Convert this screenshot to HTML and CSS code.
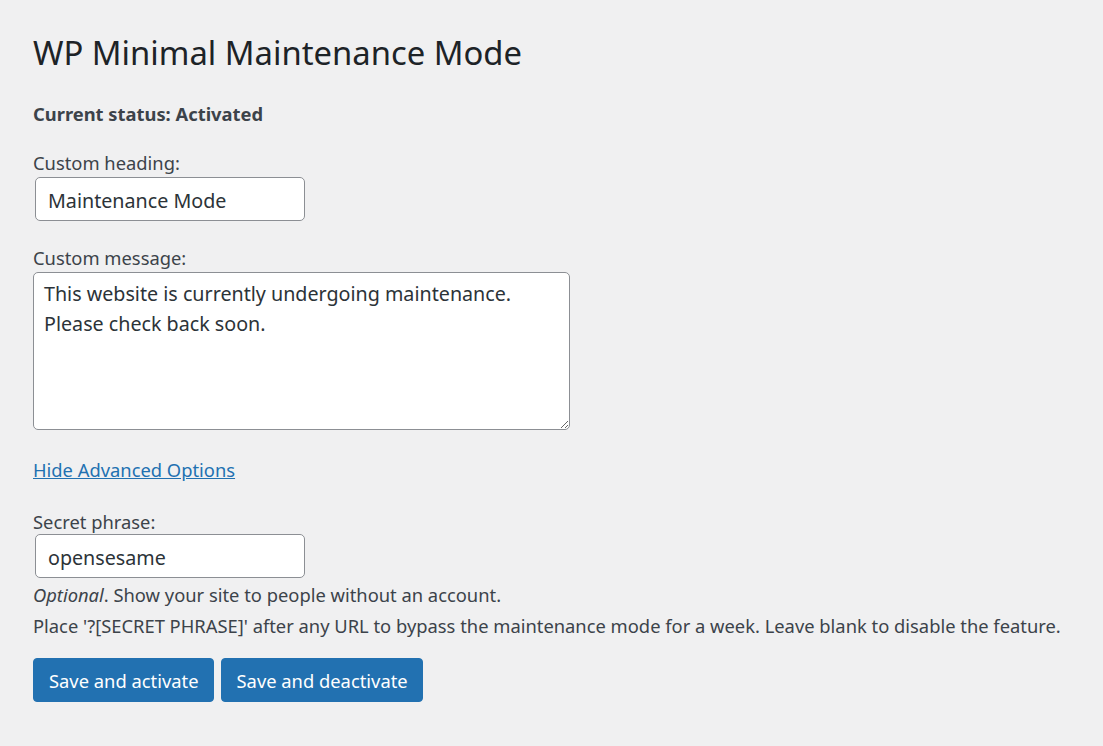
FILE: index.html
```html
<!DOCTYPE html>
<html>
<head>
<meta charset="utf-8">
<link rel="stylesheet" href="styles.css">
</head>
<body>
<div class="wrap">
  <h1 class="title">WP Minimal Maintenance Mode</h1>
  <p class="status">Current status: Activated</p>
  <form class="form">
    <div class="field field-heading">
      <label class="label" for="heading">Custom heading:</label>
      <input class="input" id="heading" type="text" value="Maintenance Mode">
    </div>
    <div class="field field-message">
      <label class="label" for="message">Custom message:</label>
      <textarea class="textarea" id="message">This website is currently undergoing maintenance.
Please check back soon.</textarea>
    </div>
    <a class="toggle" href="#">Hide Advanced Options</a>
    <div class="field field-secret">
      <label class="label" for="secret">Secret phrase:</label>
      <input class="input" id="secret" type="text" value="opensesame">
      <p class="desc"><em>Optional</em>. Show your site to people without an account.<br>Place '?[SECRET PHRASE]' after any URL to bypass the maintenance mode for a week. Leave blank to disable the feature.</p>
    </div>
    <div class="actions">
      <button class="button" type="button">Save and activate</button>
      <button class="button" type="button">Save and deactivate</button>
    </div>
  </form>
</div>
</body>
</html>
```
FILE: styles.css
```css
html, body {
  margin: 0;
  padding: 0;
  background: #f0f0f1;
}
body {
  font-family: "Noto Sans", "Open Sans", sans-serif;
  font-size: 18.35px;
  color: #3c434a;
}
.wrap {
  padding: 30px 33px;
}
.title {
  margin: 0;
  font-size: 32.8px;
  font-weight: 400;
  color: #1d2327;
  line-height: 46px;
}
.status {
  margin: 24px 0 0;
  font-weight: 700;
  line-height: 28px;
}
.form {
  display: flex;
  flex-direction: column;
  align-items: flex-start;
}
.field {
  display: flex;
  flex-direction: column;
  align-items: flex-start;
}
.field-heading {
  margin-top: 23px;
}
.field-message {
  margin-top: 25px;
}
.label {
  line-height: 24px;
}
.input {
  margin: 0 0 0 2px;
  box-sizing: border-box;
  width: 270px;
  height: 44px;
  padding: 2px 12px 0;
  border: 1px solid #8c8f94;
  border-radius: 5px;
  background: #fff;
  font: inherit;
  font-size: 19.7px;
  color: #2c3338;
}
.field-heading .input {
  margin-top: 2px;
}
.textarea {
  margin-top: 2px;
  box-sizing: border-box;
  width: 537px;
  height: 158px;
  padding: 6px 10px;
  border: 1px solid #8c8f94;
  border-radius: 5px;
  background: #fff;
  font: inherit;
  font-size: 19.7px;
  line-height: 30px;
  color: #2c3338;
}
.toggle {
  margin-top: 26px;
  color: #2271b1;
  line-height: 28px;
}
.field-secret {
  margin-top: 26px;
}
.desc {
  margin: 1px 0 0;
  line-height: 31px;
}
.actions {
  display: flex;
  gap: 7px;
  margin-top: 17px;
}
.button {
  height: 44px;
  padding: 0 14px 0 15px;
  border: 1px solid #2271b1;
  border-radius: 4px;
  background: #2271b1;
  color: #fff;
  font: inherit;
}
```
